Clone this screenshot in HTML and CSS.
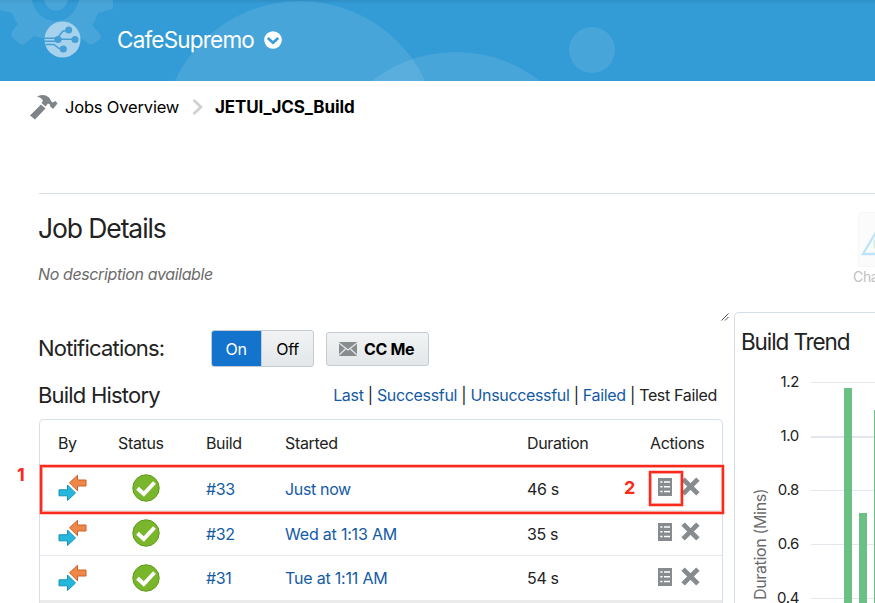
FILE: index.html
```html
<!DOCTYPE html>
<html lang="en">
<head>
<meta charset="utf-8">
<title>JETUI_JCS_Build</title>
<link rel="stylesheet" href="styles.css">
</head>
<body>
<svg class="defs" width="0" height="0" aria-hidden="true">
  <symbol id="by" viewBox="0 0 30 28">
    <path d="M11.500 8.800 19.500 1.300v4.700H28v6H19.500v4.700z" fill="#ee8748" stroke="#c9622a"/>
    <path d="M17.500 19 9.500 11v4.800H1v6H9.500v4.700z" fill="#25b7dc" stroke="#1792b4"/>
  </symbol>
  <symbol id="ok" viewBox="0 0 28 28">
    <circle cx="14" cy="14" r="13.200" fill="#7ab62c" stroke="#5f9a1c"/>
    <path d="M5.500 14.300 11.800 20 22.500 8.500" fill="none" stroke="#fff" stroke-width="4"/>
  </symbol>
  <symbol id="log" viewBox="0 0 14 18">
    <path d="M0 0h14v18H0z" fill="#858b8f"/>
    <path d="M2.300 4h2.200M2.300 8.700h2.200M2.300 13.400h2.200M6 4h6M6 8.700h6M6 13.400h6" stroke="#fff" stroke-width="1.500"/>
  </symbol>
  <symbol id="del" viewBox="0 0 18 18">
    <path d="M2 2 16 16M16 2 2 16" stroke="#858b8f" stroke-width="4.600"/>
  </symbol>
</svg>
<header class="top">
  <svg class="deco" width="875" height="81" viewBox="0 0 875 81">
    <g fill="#fff" fill-opacity=".1">
      <path d="M0 0H32C34 12 44 21 56 21S76 12 79 0H113V7Q113 10 109 10L98 13Q96 20 92 25L100 34Q102 36 100 39L93 44Q90 45 88 43L78 36Q67 42 56 42L34 36 26 43Q23 46 20 44L12 37Q10 34 12 32L18 24Q14 19 12 13L0 10Z"/>
      <path d="M44 0H68Q65 11 56 11T44 0Z"/>
      <circle cx="300" cy="139" r="138"/>
      <circle cx="456" cy="188" r="136"/>
      <circle cx="592" cy="50" r="23"/>
    </g>
  </svg>
  <svg class="logo" width="37" height="37" viewBox="0 0 37 37">
    <circle cx="18.500" cy="18.500" r="18" fill="#a6d2ee"/>
    <g fill="none" stroke="#459fd5" stroke-width="1.500"><path d="M0 17.200h14M0 20.300h14M14 18.300h17M13.500 17l5-6.500 6-1.500M1.500 23.500h8.500l5 4h4"/></g>
    <g fill="#459fd5"><circle cx="14" cy="18.500" r="3.600"/><circle cx="24.700" cy="9" r="3.500"/><circle cx="31" cy="18.500" r="3.500"/><circle cx="19.300" cy="28" r="3.600"/></g>
  </svg>
  <span class="brand">CafeSupremo</span>
  <svg class="chev" width="18" height="18" viewBox="0 0 18 18"><circle cx="9" cy="9" r="8.800" fill="#fff"/><path d="M3.800 7 9 11.800 14.200 7" fill="none" stroke="#359cd6" stroke-width="2.600"/></svg>
</header>
<nav class="crumbs">
  <svg class="hammer" width="28" height="26" viewBox="0 0 28 26"><path d="M0 21.500 11 10.500l4.500 4L5 25.500zM7 2.500Q11 0 16 1.500q3.500 1.500 5 5.500l1.500 1.500 3-1.500 2 2.500-4.500 5.500-3-3v-1.500l-2-1-2.500 3-4-3.500 1.500-2.500Q11.500 3.500 7 2.500z" fill="#7e8488"/></svg>
  <a class="jobs">Jobs Overview</a>
  <svg class="sep" width="11" height="16" viewBox="0 0 11 16"><path d="M1.500 1 9 8l-7.500 7" fill="none" stroke="#cfd1d3" stroke-width="2.800"/></svg>
  <b class="current">JETUI_JCS_Build</b>
</nav>
<main>
  <section class="details">
    <div>
      <h1>Job Details</h1>
      <p class="desc">No description available</p>
    </div>
    <div class="changes">
      <svg width="48" height="55" viewBox="0 0 48 55"><rect x=".5" y=".5" width="47" height="54" rx="2" fill="#fbfbfb" stroke="#f6f6f6"/><path d="M5 42 24 10l19 32z" fill="none" stroke="#bde5f7" stroke-width="2.400"/><circle cx="24" cy="32" r="9" fill="#d9efe3"/></svg>
      <span>Changes</span>
    </div>
  </section>
  <div class="cols">
    <section class="history">
      <svg class="grip" width="8" height="8" viewBox="0 0 8 8"><path d="M.5 7.500l7-7M4 7.500 7.500 4" stroke="#555" stroke-width="1"/></svg>
      <div class="notify">
        <h2 class="nlabel">Notifications:</h2>
        <div class="toggle"><span class="on">On</span><span class="off">Off</span></div>
        <button class="cc"><svg width="18" height="14" viewBox="0 0 18 14"><path d="M0 0h18v14H0z" fill="#878c8f"/><path d="M0 1l9 7 9-7M0 13l6.500-6M18 13l-6.500-6" fill="none" stroke="#e6e9eb" stroke-width="1.200"/></svg><b>CC Me</b></button>
      </div>
      <div class="bar">
        <h2 class="hlabel">Build History</h2>
        <div class="filters"><a>Last</a> | <a>Successful</a> | <a>Unsuccessful</a> | <a>Failed</a> | Test Failed</div>
      </div>
      <div class="table">
        <div class="row head"><span>By</span><span>Status</span><span>Build</span><span>Started</span><span>Duration</span><span>Actions</span></div>
        <div class="row"><svg class="by"><use href="#by"/></svg><svg class="ok"><use href="#ok"/></svg><a>#33</a><a>Just now</a><span>46 s</span><span class="acts"><svg class="log"><use href="#log"/></svg><svg class="del"><use href="#del"/></svg></span></div>
        <div class="row"><svg class="by"><use href="#by"/></svg><svg class="ok"><use href="#ok"/></svg><a>#32</a><a class="when">Wed at 1:13 AM</a><span>35 s</span><span class="acts"><svg class="log"><use href="#log"/></svg><svg class="del"><use href="#del"/></svg></span></div>
        <div class="row last"><svg class="by"><use href="#by"/></svg><svg class="ok"><use href="#ok"/></svg><a>#31</a><a class="when">Tue at 1:11 AM</a><span>54 s</span><span class="acts"><svg class="log"><use href="#log"/></svg><svg class="del"><use href="#del"/></svg></span></div>
        <div class="foot"></div>
        <div class="mark mark-row"></div>
        <div class="mark mark-icon"></div>
        <b class="num num-1">1</b>
        <b class="num num-2">2</b>
      </div>
    </section>
    <section class="trend">
      <h2>Build Trend</h2>
      <div class="chart">
        <span class="axis">Duration (Mins)</span>
        <div class="ticks"><span>1.2</span><span>1.0</span><span>0.8</span><span>0.6</span><span>0.4</span></div>
        <svg class="plot" width="64" height="231" viewBox="0 0 64 231">
          <path d="M0 10.500h64M0 118.500h64M0 172.500h64M0 226.500h64" stroke="#e3e6ea"/>
          <path d="M0 65h64" stroke="#e3e6ed" stroke-width="2"/>
          <path d="M33 16h8v215h-8zM48 141h8v90h-8zM63 38h1v193h-1z" fill="#6bc185"/>
        </svg>
      </div>
    </section>
  </div>
</main>
</body>
</html>
```
FILE: styles.css
```css
* { box-sizing: border-box; }
html, body { margin: 0; height: 603px; overflow: hidden; }
body { background: #fff; color: #222; font: 16px/20px Inter, "Liberation Sans", sans-serif; letter-spacing: -0.35px; white-space: nowrap; }
svg { display: block; flex: none; }
.defs { position: absolute; }
a { color: #145aa5; }
h1, h2, p { margin: 0; font-weight: 400; }
.top { position: relative; height: 81px; padding: 0 0 2px 44px; background: linear-gradient(#2f8fc6, #339bd6 4px); display: flex; align-items: center; overflow: hidden; }
.deco { position: absolute; left: 0; top: 0; }
.logo, .brand, .chev { position: relative; }
.brand { margin-left: 36px; width: 138px; font-size: 22.5px; line-height: 30px; letter-spacing: -0.8px; color: #fff; }
.chev { margin-left: 9px; }
.crumbs { height: 112px; padding: 13px 0 0 30px; display: flex; align-items: flex-start; color: #000; }
.crumbs a, .crumbs b { line-height: 26px; color: #000; }
.jobs { width: 114px; margin-left: 7px; font-size: 16.5px; letter-spacing: -0.18px; }
.sep { margin: 5px 0 0 13px; }
.current { margin-left: 12px; font-size: 17px; letter-spacing: -0.12px; }
main { height: 410px; margin-left: 39px; border-top: 1px solid #d6dfe6; overflow: hidden; }
.details { height: 118px; display: flex; justify-content: space-between; }
h1 { margin: 17px 0 0 -1px; font-size: 26.5px; line-height: 34px; letter-spacing: -1.1px; }
.desc { margin: 19px 0 0 -1px; font-style: italic; color: #6b6b6b; letter-spacing: -0.38px; }
.changes { margin: 18px -32px 0 0; width: 54px; color: #c0c0c0; font-size: 14px; }
.changes svg { margin-left: 5px; }
.cols { display: flex; gap: 11px; height: 291px; }
main, .table { overflow: visible; }
.history { flex: none; width: 684px; padding-top: 18px; position: relative; }
.grip { position: absolute; left: 682px; top: 1px; }
.notify { height: 37px; display: flex; }
.nlabel, .hlabel { margin-left: -1px; font-size: 22px; line-height: 36px; letter-spacing: -0.8px; }
.nlabel { width: 173px; }
.toggle { display: flex; width: 103px; border: 1px solid #c3ccd4; border-radius: 3px; background: linear-gradient(#f1f3f4, #e3e7e9); color: #000; line-height: 37px; text-align: center; overflow: hidden; }
.on { width: 50px; margin: -1px 0 -1px -1px; background: #1474cd; color: #fff; line-height: 39px; }
.off { flex: 1; border-left: 1px solid #c3ccd4; }
.cc { margin: 2px 0 0 12px; width: 103px; height: 34px; padding: 0 0 0 12px; border: 1px solid #c3ccd4; border-radius: 3px; background: linear-gradient(#f1f3f4, #e3e7e9); display: flex; align-items: center; gap: 7px; font: inherit; letter-spacing: inherit; color: #000; }
.bar { height: 52px; padding-top: 10px; display: flex; justify-content: space-between; }
.filters { line-height: 37px; margin-right: 6px; letter-spacing: -0.33px; }
.table { position: relative; border: 1px solid #d6dfe6; border-bottom: 0; border-radius: 5px 5px 0 0; height: 184px; }
.row { display: grid; grid-template-columns: 60px 88px 79px 242px 123px 1fr; height: 45px; padding-left: 18px; align-items: center; border-bottom: 1px solid #e6e9eb; }
.row.head { height: 46px; border: 0; }
.row > a, .row:not(.head) > span { padding-top: 2px; }
.row.last { height: 44px; border: 0; }
.row.last > a, .row.last > span { padding-top: 0; }
.when { letter-spacing: -0.2px; }
.by { width: 30px; height: 28px; }
.ok { width: 28px; height: 28px; margin-left: 14px; }
.row:not(.head) > .acts { display: flex; gap: 9px; padding: 0 0 0 8px; align-items: center; margin-top: -3px; }
.log { width: 14px; height: 18px; }
.del { width: 19px; height: 19px; }
.foot { height: 3px; background: #ebebeb; }
.mark { position: absolute; border: 2px solid #fb2a1c; box-shadow: 0 0 0 .5px #fb2a1c80, inset 0 0 0 1px #fb2a1c70; }
.mark-row { left: 0; top: 45px; width: 684px; height: 49px; }
.mark-icon { left: 609px; top: 51px; width: 34px; height: 35px; }
.num { position: absolute; color: #fb2a1c; font-size: 18px; }
.num-1 { left: -23px; top: 45px; }
.num-2 { left: 584px; top: 58px; }
.trend { flex: none; width: 150px; height: 291px; padding: 15px 0 0 6px; border: 1px solid #d6dfe6; border-bottom: 0; border-radius: 5px 0 0 0; }
.trend h2 { font-size: 22.5px; line-height: 28px; letter-spacing: -1.1px; }
.chart { display: flex; margin: 16px 0 0 7px; }
.axis { writing-mode: vertical-rl; transform: rotate(180deg); width: 24px; height: 228px; line-height: 24px; color: #6b6b6b; }
.ticks { flex: none; width: 27px; height: 231px; margin: 0 12px 0 0; text-align: right; font-size: 15px; }
.ticks span { display: block; height: 54px; }
.ticks span:last-child { height: 15px; }
```
